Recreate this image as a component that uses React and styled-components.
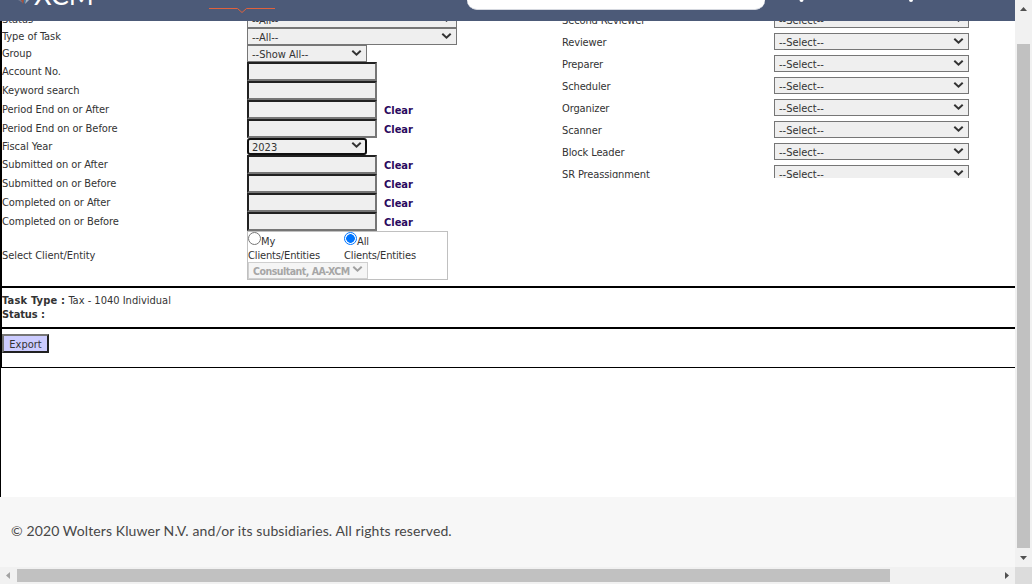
import React from "react";
import styled, { createGlobalStyle, css } from "styled-components";

const Global = createGlobalStyle`
  * { box-sizing: border-box; }
  html, body { margin: 0; padding: 0; overflow: hidden; background: #fff; }
`;

const Window = styled.div`
  display: grid;
  grid-template: 567px 17px / 1015px 17px;
  width: 1032px;
  height: 584px;
  overflow: hidden;
  color: #333;
  font: 11px/14px "DejaVu Sans Condensed", "Noto Sans", sans-serif;
`;

const Page = styled.div`
  display: flex;
  flex-direction: column;
  overflow: hidden;
`;

const Header = styled.header`
  position: relative;
  z-index: 1;
  flex: none;
  display: flex;
  align-items: flex-start;
  height: 21px;
  overflow: hidden;
  background: #4c5a78;
`;

const Brand = styled.div`
  display: flex;
  width: 209px;
  padding-left: 18px;
`;

const BrandName = styled.span`
  display: block;
  margin: -17px 0 0 3px;
  color: #fff;
  font: 27px/23px Lato, sans-serif;
`;

const SearchBox = styled.div`
  width: 298px;
  height: 10px;
  margin-left: 191px;
  background: #fff;
  border-bottom: 1px solid #d5d8df;
  border-radius: 0 0 16px 16px;
`;

const HeaderMarks = styled.svg`
  display: block;
  flex: none;
`;

const Content = styled.main`
  flex: none;
  height: 486px;
  margin-top: -10px;
  border-left: 1px solid #000;
`;

const ReportFrame = styled.div`
  height: 357px;
  border-left: 1px solid #000;
  border-bottom: 1px solid #000;
`;

const Filters = styled.section`
  display: flex;
  height: 275px;
`;

const FilterColumn = styled.div`
  width: 560px;
`;

const StaffColumn = styled.div`
  height: 167px;
  overflow: hidden;
`;

const Row = styled.div`
  display: flex;
  align-items: center;
  height: ${(p) => p.$h}px;
`;

const Label = styled.div`
  width: 245px;
  white-space: nowrap;
  letter-spacing: -0.06px;
`;

const StaffRow = styled.div`
  display: flex;
  height: 22px;
`;

const StaffLabel = styled.div`
  width: 212px;
  padding-top: 2px;
  line-height: 15px;
  letter-spacing: -0.12px;
`;

const SelectBox = styled.div`
  display: flex;
  align-items: center;
  justify-content: space-between;
  width: ${(p) => p.$w}px;
  height: 17px;
  padding: 2px 4px 0 4px;
  background: #efefef;
  border: 1px solid #767676;
  line-height: 13px;
  white-space: nowrap;
  ${(p) => p.$focused && css`
    padding: 1px 3px 0 3px;
    border: 2px solid #101010;
    border-radius: 3px;
  `}
  ${(p) => p.$disabled && css`
    padding-top: 1px;
    color: #a6a6a6;
    border-color: #cfcfcf;
    font-size: 10.5px;
    font-weight: bold;
    letter-spacing: -0.5px;
    background: #f5f5f5;
  `}
`;

const Chevron = styled.svg`
  display: block;
  flex: none;
  margin-bottom: 4px;
`;

const TextField = styled.div`
  width: 130px;
  height: 19px;
  background: #efefef;
  border: 2px solid;
  border-color: #212121 #767676 #767676 #212121;
`;

const ClearLink = styled.a`
  padding: 2px 0 0 7px;
  color: #2a0a5e;
  font-weight: bold;
`;

const ClientBox = styled.div`
  width: 201px;
  height: 49px;
  border: 1px solid #c0c0c0;
`;

const ClientOptions = styled.div`
  display: flex;
  height: 30px;
`;

const ClientOption = styled.div`
  width: 96px;
  line-height: 14px;
  letter-spacing: -0.14px;
`;

const OptionHead = styled.div`
  display: flex;
  height: 17px;
  line-height: 19px;
`;

const Radio = styled.span`
  width: 13px;
  height: 13px;
  border: 1px solid ${(p) => (p.$on ? "#0075ff" : "#767676")};
  border-radius: 50%;
  background: ${(p) => (p.$on ? "radial-gradient(circle, #0075ff 4px, #fff 4.6px)" : "#fff")};
`;

const Summary = styled.section`
  height: 43px;
  padding-top: 6px;
  border-top: 2px solid #000;
  border-bottom: 2px solid #000;
`;

const SummaryName = styled.b`
  letter-spacing: ${(p) => p.$track}px;
`;

const Actions = styled.div`
  padding-top: 5px;
`;

const ExportButton = styled.button`
  display: block;
  width: 47px;
  height: 19px;
  padding: 2px 0 0;
  background: #ccccff;
  border: 2px solid;
  border-color: #767676 #212121 #212121 #767676;
  color: #333;
  font: inherit;
  line-height: 13px;
`;

const Footer = styled.footer`
  flex: none;
  height: 70px;
  padding: 24px 0 0 11px;
  background: #f7f7f7;
  color: #474747;
  font: 14px/20px Lato, sans-serif;
  letter-spacing: 0.11px;
  white-space: nowrap;
`;

const VerticalBar = styled.div`
  display: flex;
  flex-direction: column;
  align-items: center;
  background: #f1f1f1;
`;

const VerticalThumb = styled.div`
  width: 13px;
  height: 504px;
  margin: 27px 0 2px;
  background: #c1c1c1;
`;

const HorizontalBar = styled.div`
  display: flex;
  align-items: center;
  background: #f1f1f1;
`;

const HorizontalThumb = styled.div`
  width: 873px;
  height: 13px;
  margin-right: 108px;
  background: #c1c1c1;
`;

const Corner = styled.div`
  background: #dcdcdc;
`;

const Arrow = styled.svg`
  display: block;
  flex: none;
`;

function Select({ children, ...rest }) {
  return (
    <SelectBox {...rest}>
      <span>{children}</span>
      <Chevron width="11" height="8" viewBox="0 0 11 8">
        <path d="M1.3 1.7 5.500 5.700 9.700 1.7" fill="none" stroke={rest.$disabled ? "#a0a0a0" : "#333"} strokeWidth="2" />
      </Chevron>
    </SelectBox>
  );
}

const filters = [
  { label: "Status", select: "--All--", w: 210 },
  { label: "Type of Task", select: "--All--", w: 210 },
  { label: "Group", select: "--Show All--", w: 120 },
  { label: "Account No." },
  { label: "Keyword search" },
  { label: "Period End on or After", clear: true },
  { label: "Period End on or Before", clear: true },
  { label: "Fiscal Year", select: "2023", w: 120, focused: true },
  { label: "Submitted on or After", clear: true },
  { label: "Submitted on or Before", clear: true },
  { label: "Completed on or After", clear: true },
  { label: "Completed on or Before", clear: true },
];

const staff = ["Second Reviewer", "Reviewer", "Preparer", "Scheduler", "Organizer", "Scanner", "Block Leader", "SR Preassignment"];

export default function App() {
  return (
    <Window>
      <Global />
      <Page>
        <Header>
          <Brand>
            <HeaderMarks width="13" height="5" viewBox="0 0 13 5">
              <path d="M0 0h3l2 3z" fill="#6d7890" />
              <path d="M3 0h3l-1 4z" fill="#a5523f" />
              <path d="M6 0h2L6 4z" fill="#3d7fa8" />
              <path d="M8 0h3L7 4z" fill="#a9b3c1" />
            </HeaderMarks>
            <BrandName>XCM</BrandName>
          </Brand>
          <HeaderMarks width="67" height="14" viewBox="0 0 67 14">
            <path d="M0 8.5h28.500l4.500 4 4.500-4h28.500" fill="none" stroke="#e0613c" />
          </HeaderMarks>
          <SearchBox />
          <HeaderMarks width="150" height="4" viewBox="0 0 150 4">
            <circle cx="36.500" cy="0" r="2" fill="#fff" />
            <circle cx="146" cy="0" r="2" fill="#fff" />
          </HeaderMarks>
        </Header>
        <Content>
          <ReportFrame>
            <Filters>
              <FilterColumn>
                {filters.map((f) => (
                  <Row key={f.label} $h={f.select ? 17 : 19}>
                    <Label>{f.label}</Label>
                    {f.select ? <Select $w={f.w} $focused={f.focused}>{f.select}</Select> : <TextField />}
                    {f.clear && <ClearLink>Clear</ClearLink>}
                  </Row>
                ))}
                <Row $h={49}>
                  <Label>Select Client/Entity</Label>
                  <ClientBox>
                    <ClientOptions>
                      <ClientOption>
                        <OptionHead><Radio />My</OptionHead>
                        Clients/Entities
                      </ClientOption>
                      <ClientOption>
                        <OptionHead><Radio $on />All</OptionHead>
                        Clients/Entities
                      </ClientOption>
                    </ClientOptions>
                    <Select $w={120} $disabled>Consultant, AA-XCM</Select>
                  </ClientBox>
                </Row>
              </FilterColumn>
              <StaffColumn>
                {staff.map((name) => (
                  <StaffRow key={name}>
                    <StaffLabel>{name}</StaffLabel>
                    <Select $w={195}>--Select--</Select>
                  </StaffRow>
                ))}
              </StaffColumn>
            </Filters>
            <Summary>
              <div><SummaryName $track={0.2}>Task Type :</SummaryName> Tax - 1040 Individual</div>
              <div><SummaryName $track={-0.1}>Status :</SummaryName></div>
            </Summary>
            <Actions>
              <ExportButton>Export</ExportButton>
            </Actions>
          </ReportFrame>
        </Content>
        <Footer>© 2020 Wolters Kluwer N.V. and/or its subsidiaries. All rights reserved.</Footer>
      </Page>
      <VerticalBar>
        <Arrow width="17" height="17" viewBox="0 0 17 17"><path d="M5 11h7L8.500 7z" fill="#505050" /></Arrow>
        <VerticalThumb />
        <Arrow width="17" height="17" viewBox="0 0 17 17"><path d="M5 6h7L8.500 10z" fill="#505050" /></Arrow>
      </VerticalBar>
      <HorizontalBar>
        <Arrow width="17" height="17" viewBox="0 0 17 17"><path d="M10 5v7L6 8.500z" fill="#a3a3a3" /></Arrow>
        <HorizontalThumb />
        <Arrow width="17" height="17" viewBox="0 0 17 17"><path d="M7 5v7l4-3.500z" fill="#505050" /></Arrow>
      </HorizontalBar>
      <Corner />
    </Window>
  );
}
